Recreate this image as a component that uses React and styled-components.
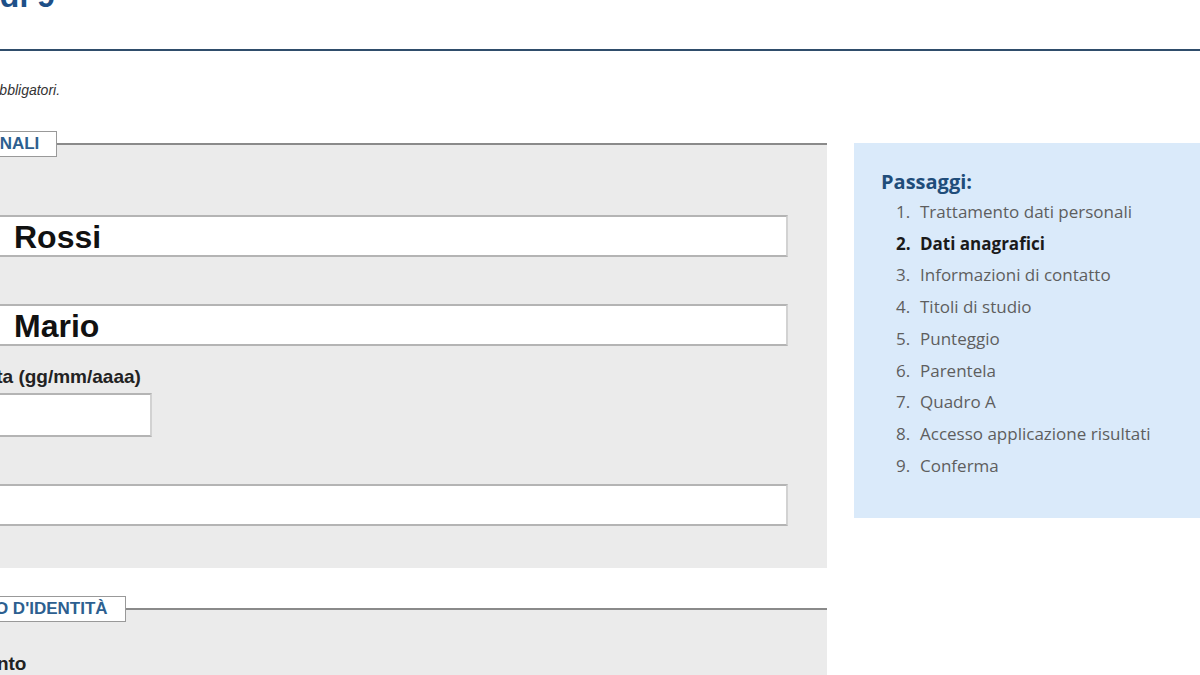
import React from "react";
import styled, { createGlobalStyle } from "styled-components";

const GlobalStyle = createGlobalStyle`
  html, body {
    margin: 0;
    padding: 0;
    background: #ffffff;
    overflow: hidden;
  }

  body {
    font-family: "Liberation Sans", Arial, sans-serif;
    color: #222;
  }
`;

// the shot is cropped: the page column begins left of the window
const Page = styled.div`
  margin-left: -121px;
  width: calc(100% + 121px);
`;

const Header = styled.header`
  padding-bottom: 37px;
  border-bottom: 2px solid #2f4d6b;
`;

const Title = styled.h1`
  margin: -20px 0 0 -9px;
  font-size: 32px;
  line-height: 32px;
  font-weight: bold;
  color: #1e5088;
`;

const Note = styled.p`
  margin: 29px 0 31px;
  font-size: 14px;
  line-height: 20px;
  font-style: italic;
  color: #333;
`;

const Main = styled.div`
  display: grid;
  grid-template-columns: 948px 1fr;
  column-gap: 27px;
  align-items: start;
`;

const FormColumn = styled.div`
  display: flex;
  flex-direction: column;
  gap: 28px;
`;

const Fieldset = styled.fieldset`
  margin: 0;
  min-inline-size: 0;
  border: 0;
  border-top: 2px solid #8a8a8a;
  padding: 31px 39px 42px 0;
  background: #ebebeb;

  legend {
    margin: 0;
    padding: 2px 17px;
    border: 1px solid #999;
    background: #fff;
    font-size: 17px;
    line-height: 20px;
    font-weight: bold;
    text-transform: uppercase;
    color: #2d5f90;
  }
`;

const Field = styled.div`
  display: flex;
  flex-direction: column;

  & + & {
    margin-top: 20px;
  }
`;

const Label = styled.label`
  margin-bottom: 5px;
  font-size: 19px;
  line-height: 22px;
  font-weight: bold;
  color: #222;
`;

const Input = styled.input`
  box-sizing: border-box;
  width: ${(p) => (p.$short ? "273px" : "100%")};
  height: ${(p) => (p.$short ? "44px" : "42px")};
  margin: 0;
  padding: 2px 0 0 133px;
  border: 2px solid #b4b4b4;
  border-right-color: #d2d2d2;
  border-radius: 0;
  background: #fff;
  font-family: "Liberation Sans", Arial, sans-serif;
  font-size: 32px;
  font-weight: bold;
  color: #111;
  outline: none;
`;

const Steps = styled.aside`
  margin-top: 12px;
  padding: 26px 27px 37px;
  background: #daeafa;
  font-family: "Open Sans", sans-serif;
`;

const StepsTitle = styled.h3`
  margin: 0 0 1px;
  font-size: 20px;
  line-height: 26px;
  font-weight: bold;
  color: #1f4d7a;
`;

const StepList = styled.ol`
  margin: 0;
  padding: 0;
  list-style: none;
  counter-reset: step;
`;

const Step = styled.li`
  display: flex;
  padding-left: 15px;
  font-size: 17px;
  line-height: 31.7px;
  counter-increment: step;
  color: ${(p) => (p.$current ? "#1a1a1a" : "#5e5e5e")};
  font-weight: ${(p) => (p.$current ? 700 : 400)};

  &::before {
    content: counter(step) ".";
    width: 24px;
    flex: none;
  }
`;

const steps = [
  "Trattamento dati personali",
  "Dati anagrafici",
  "Informazioni di contatto",
  "Titoli di studio",
  "Punteggio",
  "Parentela",
  "Quadro A",
  "Accesso applicazione risultati",
  "Conferma",
];

const App = () => {
  return (
    <>
      <GlobalStyle />
      <Page>
        <Header>
          <Title>Passo 2 di 9</Title>
        </Header>
        <Note>Tutti i campi sono obbligatori.</Note>
        <Main>
          <FormColumn>
            <Fieldset>
              <legend>Dati personali</legend>
              <Field>
                <Label htmlFor="cognome">Cognome</Label>
                <Input id="cognome" defaultValue="Rossi" />
              </Field>
              <Field>
                <Label htmlFor="nome">Nome</Label>
                <Input id="nome" defaultValue="Mario" />
              </Field>
              <Field>
                <Label htmlFor="nascita">Data di nascita (gg/mm/aaaa)</Label>
                <Input id="nascita" $short defaultValue="" />
              </Field>
              <Field>
                <Label htmlFor="luogo">Luogo</Label>
                <Input id="luogo" defaultValue="" />
              </Field>
            </Fieldset>
            <Fieldset>
              <legend>Documento d'identità</legend>
              <Field>
                <Label htmlFor="tipo">Tipo documento</Label>
                <Input id="tipo" defaultValue="" />
              </Field>
            </Fieldset>
          </FormColumn>
          <Steps>
            <StepsTitle>Passaggi:</StepsTitle>
            <StepList>
              {steps.map((s, i) => (
                <Step key={s} $current={i === 1}>
                  {s}
                </Step>
              ))}
            </StepList>
          </Steps>
        </Main>
      </Page>
    </>
  );
};

export default App;
